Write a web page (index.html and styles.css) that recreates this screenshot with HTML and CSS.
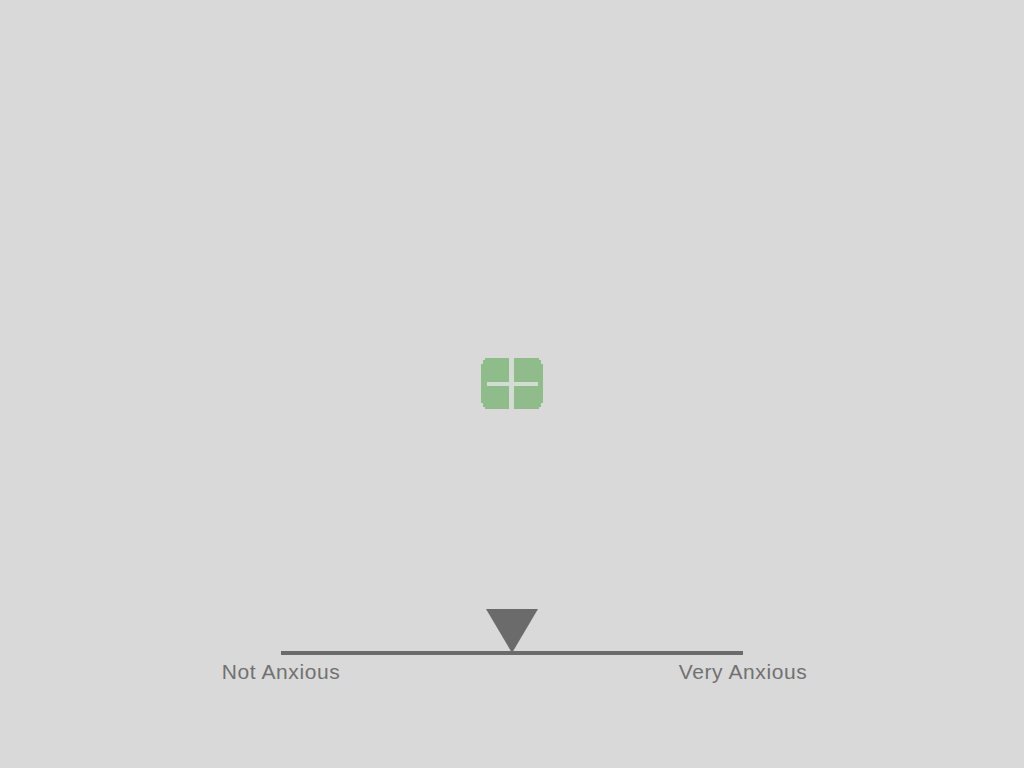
FILE: index.html
```html
<!DOCTYPE html>
<html lang="en">
<head>
<meta charset="utf-8">
<title>Anxiety rating</title>
<link rel="stylesheet" href="styles.css">
</head>
<body>
<main class="screen">
  <div class="stimulus" aria-label="stimulus">
    <svg class="stimulus-icon" width="62" height="51" viewBox="0 0 62 51">
      <path fill="#8fbd8a" d="M4 0 H58 V2 H60 V6 H62 V45 H60 V49 H58 V51 H4 V49 H2 V45 H0 V6 H2 V2 H4 Z"/>
      <rect x="28" y="0" width="5" height="51" fill="#d5dad4"/>
      <rect x="6" y="24" width="51" height="4" fill="#d5dad4"/>
    </svg>
  </div>
  <section class="scale">
    <div class="scale-track">
      <svg class="scale-marker" width="54" height="44" viewBox="0 0 54 44">
        <polygon points="1,0 53,0 27,44" fill="#6b6b6b"/>
      </svg>
      <div class="scale-line"></div>
    </div>
    <div class="scale-labels">
      <span class="scale-label"><span>Not Anxious</span></span>
      <span class="scale-label"><span>Very Anxious</span></span>
    </div>
  </section>
</main>
</body>
</html>
```

FILE: styles.css
```css
html, body {
  margin: 0;
  padding: 0;
  background: #d9d9d9;
}

.screen {
  width: 1024px;
  height: 768px;
  display: flex;
  flex-direction: column;
  align-items: center;
  padding-top: 358px;
  box-sizing: border-box;
  font-family: "Liberation Sans", Arial, sans-serif;
}

.stimulus {
  width: 62px;
  height: 51px;
  margin-left: -1px;
}

.stimulus-icon {
  display: block;
}

.scale {
  margin-top: 200px;
  width: 462px;
  display: flex;
  flex-direction: column;
}

.scale-track {
  display: flex;
  flex-direction: column;
  align-items: center;
}

.scale-marker {
  display: block;
  margin-bottom: -2px;
}

.scale-line {
  align-self: stretch;
  height: 4px;
  background: #6b6b6b;
}

.scale-labels {
  display: flex;
  justify-content: space-between;
  margin-top: 5px;
}

.scale-label {
  width: 0;
  display: flex;
  justify-content: center;
  white-space: nowrap;
  font-size: 21px;
  letter-spacing: 0.6px;
  line-height: 24px;
  color: #717171;
}
```
